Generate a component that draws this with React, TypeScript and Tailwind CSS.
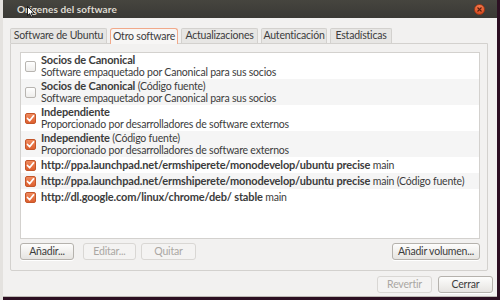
import React from 'react';

const font = { fontFamily: 'Lato, "Noto Sans", sans-serif' };

interface Source {
  checked: boolean;
  title: string;
  extra?: string;
  desc?: string;
}

const sources: Source[] = [
  { checked: false, title: 'Socios de Canonical', desc: 'Software empaquetado por Canonical para sus socios' },
  { checked: false, title: 'Socios de Canonical', extra: ' (Código fuente)', desc: 'Software empaquetado por Canonical para sus socios' },
  { checked: true, title: 'Independiente', desc: 'Proporcionado por desarrolladores de software externos' },
  { checked: true, title: 'Independiente', extra: ' (Código fuente)', desc: 'Proporcionado por desarrolladores de software externos' },
  { checked: true, title: 'http://ppa.launchpad.net/ermshiperete/monodevelop/ubuntu precise', extra: ' main' },
  { checked: true, title: 'http://ppa.launchpad.net/ermshiperete/monodevelop/ubuntu precise', extra: ' main (Código fuente)' },
  { checked: true, title: 'http://dl.google.com/linux/chrome/deb/ stable', extra: ' main' },
];

const Check: React.FC<{ checked: boolean }> = ({ checked }) =>
  checked ? (
    <div className="w-[11px] h-[11px] rounded-[2px] border border-[#c4562a] bg-gradient-to-b from-[#f08a5d] to-[#dd5f2e] flex items-center justify-center shrink-0">
      <svg width="9" height="9" viewBox="0 0 9 9">
        <path d="M1.5 4.5 L3.6 6.8 L7.6 1.8" stroke="#fff" strokeWidth="1.7" fill="none" strokeLinecap="round" strokeLinejoin="round" />
      </svg>
    </div>
  ) : (
    <div className="w-[11px] h-[11px] rounded-[2px] border border-[#b8b5b1] bg-gradient-to-b from-[#ffffff] to-[#eeedeb] shrink-0" />
  );

const Button: React.FC<{ label: string; disabled?: boolean; className?: string }> = ({ label, disabled, className = '' }) => (
  <div
    className={`h-[17px] rounded-[3px] border flex items-center justify-center text-[10.5px] tracking-[-0.2px] whitespace-nowrap ${
      disabled
        ? 'border-[#d9d7d4] bg-[#f4f3f2] text-[#aaa7a3]'
        : 'border-[#b5b2ad] bg-gradient-to-b from-[#fdfdfc] to-[#e6e4e1] text-[#3c3c3c] shadow-[0_1px_0_#ffffff]'
    } ${className}`}
  >
    {label}
  </div>
);

const tabs = [
  { label: 'Software de Ubuntu', w: 'w-[97px]' },
  { label: 'Otro software', w: 'w-[68px]' },
  { label: 'Actualizaciones', w: 'w-[77px]' },
  { label: 'Autenticación', w: 'w-[66px]' },
  { label: 'Estadísticas', w: 'w-[62px]' },
];

export default function App() {
  return (
    <div className="w-[500px] h-[300px] flex overflow-hidden relative bg-[#2c0f22]" style={font}>
      <div className="w-[3px] bg-[#e4e2df]" />
      <div className="w-[494px] h-[297px] flex flex-col bg-[#f2f1f0] border-b border-[#bdbab5]">
        {/* title bar */}
        <div className="h-[18px] bg-gradient-to-b from-[#46453f] to-[#3a3935] flex items-center justify-between pl-[14px] pr-[12px]">
          <span className="text-[10px] font-bold text-[#dfdbd2] leading-none tracking-[0.1px]">Orígenes del software</span>
          <div className="w-[11px] h-[11px] rounded-full bg-gradient-to-b from-[#f47a4d] to-[#d94a1e] flex items-center justify-center border border-[#a63a17]">
            <svg width="5" height="5" viewBox="0 0 5 5">
              <path d="M0.5 0.5 L4.5 4.5 M4.5 0.5 L0.5 4.5" stroke="#5a2210" strokeWidth="1.1" />
            </svg>
          </div>
        </div>

        <div className="flex-1 flex flex-col pl-[7px] pr-[9px] pt-[10px]">
          {/* tabs */}
          <div className="flex gap-[3px] h-[15px] items-end">
            {tabs.map((t, i) =>
              i === 1 ? (
                <div
                  key={t.label}
                  className={`${t.w} h-[16px] -mb-px rounded-t-[3px] border border-b-0 border-[#f1a98a] bg-[#f7f6f5] text-[10.5px] tracking-[-0.2px] text-[#3c3c3c] flex items-center justify-center relative z-10`}
                >
                  {t.label}
                </div>
              ) : (
                <div
                  key={t.label}
                  className={`${t.w} h-[15px] rounded-t-[2px] border border-b-0 border-[#d3d1ce] bg-[#e7e6e4] text-[10.5px] tracking-[-0.2px] text-[#3c3c3c] flex items-center justify-center`}
                >
                  {t.label}
                </div>
              )
            )}
          </div>

          {/* notebook panel */}
          <div className="h-[228px] border border-[#d3d1ce] rounded-b-[2px] flex flex-col pl-[9px] pr-[7px] pt-[8px]">
            <div className="h-[187px] bg-white border border-[#d3d1ce] flex flex-col">
              {sources.map((s, i) => (
                <div
                  key={i}
                  className={`flex items-center gap-[5px] pl-[4px] ${s.desc ? 'h-[26px]' : 'h-[16px]'} ${
                    i % 2 === 1 ? 'bg-[#f5f5f5]' : 'bg-white'
                  }`}
                >
                  <Check checked={s.checked} />
                  <div className="flex flex-col text-[10.5px] tracking-[-0.2px] leading-[12.5px] text-[#3c3c3c] whitespace-nowrap">
                    <div>
                      <span className="font-bold text-[11px] tracking-[-0.15px]">{s.title}</span>
                      {s.extra && <span>{s.extra}</span>}
                    </div>
                    {s.desc && <div>{s.desc}</div>}
                  </div>
                </div>
              ))}
            </div>
            <div className="flex mt-[4px] items-center">
              <Button label="Añadir..." className="w-[54px]" />
              <Button label="Editar..." disabled className="w-[53px] ml-[9px]" />
              <Button label="Quitar" disabled className="w-[55px] ml-[5px]" />
              <Button label="Añadir volumen..." className="w-[88px] ml-auto" />
            </div>
          </div>

          {/* dialog buttons */}
          <div className="flex justify-end gap-[6px] mt-[5px] -mr-[5px]">
            <Button label="Revertir" disabled className="w-[55px]" />
            <Button label="Cerrar" className="w-[55px]" />
          </div>
        </div>
      </div>
      <div className="w-[3px] bg-[#2c0f22]" />

      {/* mouse cursor */}
      <svg className="absolute left-[27px] top-[6px]" width="8" height="12" viewBox="0 0 8 12">
        <path d="M0.5 0.5 L0.5 9.5 L2.6 7.6 L4.1 11 L5.5 10.4 L4.1 7.1 L7 7.1 Z" fill="#fff" stroke="#000" strokeWidth="0.8" />
      </svg>
    </div>
  );
}
